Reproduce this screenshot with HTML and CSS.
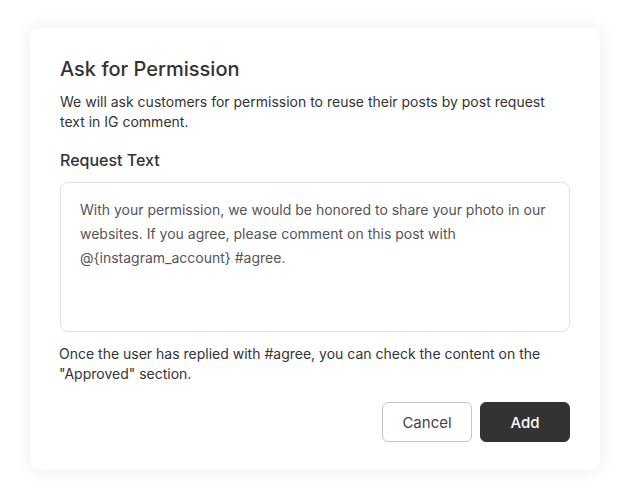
FILE: index.html
```html
<!DOCTYPE html>
<html>
<head>
<meta charset="utf-8">
<link rel="stylesheet" href="styles.css">
</head>
<body>
<div class="page">
  <div class="card">
    <h1 class="title">Ask for Permission</h1>
    <p class="desc">We will ask customers for permission to reuse their posts by post request text in IG comment.</p>
    <h2 class="label">Request Text</h2>
    <div class="textbox">With your permission, we would be honored to share your photo in our websites. If you agree, please comment on this post with @{instagram_account} #agree.</div>
    <p class="note">Once the user has replied with #agree, you can check the content on the "Approved" section.</p>
    <div class="actions">
      <button class="btn btn-cancel">Cancel</button>
      <button class="btn btn-add">Add</button>
    </div>
  </div>
</div>
</body>
</html>
```
FILE: styles.css
```css
* { box-sizing: border-box; }
html, body { margin: 0; padding: 0; background: #ffffff; }
body { font-family: Inter, "Noto Sans", sans-serif; color: #333; }
.page { padding: 27px 30px; }
.card {
  width: 570px;
  height: 443px;
  background: #fff;
  border-radius: 10px;
  box-shadow: 0 0 18px rgba(0,0,0,0.08);
  padding: 28px 30px 28px 30px;
  display: flex;
  flex-direction: column;
}
.title {
  margin: 0;
  font-size: 20px;
  line-height: 28px;
  font-weight: 500;
  color: #333;
}
.desc {
  margin: 9px 0 0;
  font-size: 14px;
  line-height: 20px;
  color: #333;
}
.label {
  margin: 16px 0 0;
  font-size: 16px;
  line-height: 24px;
  font-weight: 500;
  color: #333;
}
.textbox {
  margin-top: 10px;
  height: 150px;
  border: 1px solid #e2e2e2;
  border-radius: 8px;
  padding: 15px 19px;
  font-size: 14px;
  line-height: 24px;
  color: #555;
}
.note {
  margin: 12px 0 0 -1px;
  font-size: 14px;
  line-height: 20px;
  color: #333;
}
.actions {
  margin-top: auto;
  display: flex;
  justify-content: flex-end;
  gap: 8px;
}
.btn {
  width: 90px;
  height: 40px;
  border-radius: 6px;
  font-family: Inter, "Noto Sans", sans-serif;
  font-size: 15px;
  cursor: pointer;
}
.btn-cancel {
  background: #fff;
  border: 1px solid #c4c4c4;
  color: #444;
}
.btn-add {
  background: #333;
  border: 1px solid #333;
  color: #fff;
  font-weight: 500;
}
```
